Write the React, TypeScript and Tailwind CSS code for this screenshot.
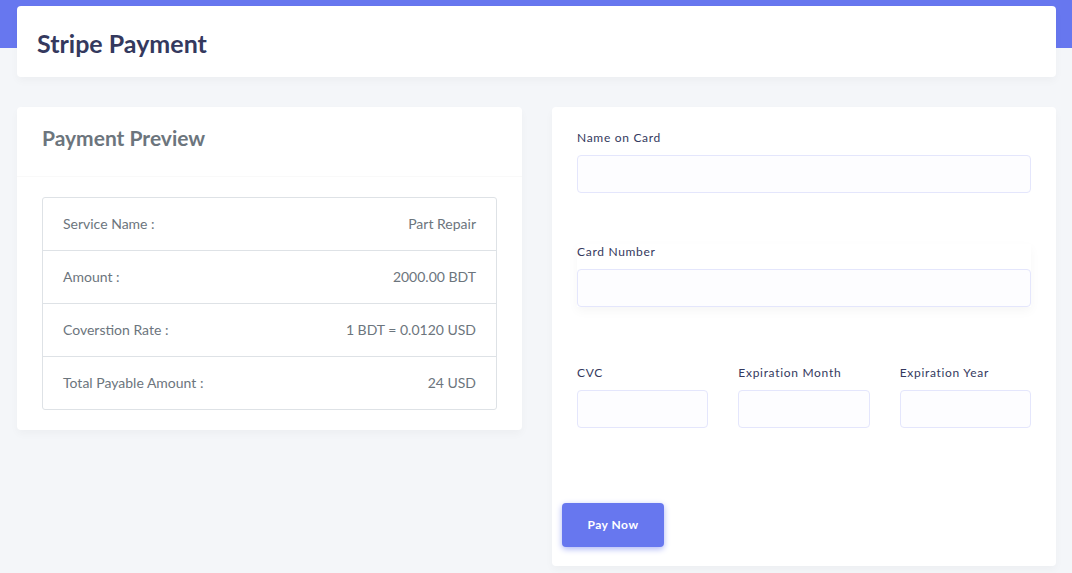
import React from 'react';

const rows = [
  { label: 'Service Name :', value: 'Part Repair' },
  { label: 'Amount :', value: '2000.00 BDT' },
  { label: 'Coverstion Rate :', value: '1 BDT = 0.0120 USD' },
  { label: 'Total Payable Amount :', value: '24 USD' },
];

const Field: React.FC<{ label: string; className?: string }> = ({ label, className = '' }) => (
  <div className={className}>
    <label className="block text-[12px] leading-[16px] font-normal tracking-[0.7px] text-[#34395e] mb-[9px]">{label}</label>
    <div className="h-[38px] rounded-[4px] border border-[#e4e6fc] bg-[#fdfdff]" />
  </div>
);

const App: React.FC = () => {
  return (
    <div className="relative min-h-[573px] bg-[#f4f6f9] font-['Lato','Open_Sans',sans-serif]">
      <div className="absolute inset-x-0 top-0 h-[48px] bg-[#6777ef]" />
      <div className="relative px-[17px] pt-[6px] pr-[16px]">
        <div className="h-[71px] rounded-[4px] bg-white shadow-[0_4px_8px_rgba(0,0,0,0.03)] flex items-center px-[20px]">
          <h1 className="text-[25px] leading-[30px] font-bold text-[#34395e] pt-[2px]">Stripe Payment</h1>
        </div>

        <div className="mt-[30px] flex gap-[30px] items-start">
          <div className="w-[505px] rounded-[4px] bg-white shadow-[0_4px_8px_rgba(0,0,0,0.03)]">
            <div className="h-[70px] border-b border-[#f9f9f9] flex items-center px-[25px]">
              <h4 className="text-[21px] leading-[26px] font-bold text-[#6c757d] pb-[8px]">Payment Preview</h4>
            </div>
            <div className="px-[25px] pt-[20px] pb-[20px]">
              <div className="rounded-[3px] border border-[#dee2e6]">
                {rows.map((r, i) => (
                  <div
                    key={r.label}
                    className={`flex items-center justify-between px-[20px] text-[14px] text-[#6c757d] pb-[2px] ${i > 0 ? 'h-[53px] border-t border-[#dee2e6]' : 'h-[52px]'}`}
                  >
                    <span>{r.label}</span>
                    <span>{r.value}</span>
                  </div>
                ))}
              </div>
            </div>
          </div>

          <div className="flex-1 h-[459px] rounded-[4px] bg-white shadow-[0_4px_8px_rgba(0,0,0,0.03)] px-[25px] pt-[23px] relative">
            <Field label="Name on Card" />
            <div className="mt-[51px] shadow-[0_4px_10px_rgba(0,0,0,0.04)]">
              <Field label="Card Number" />
            </div>
            <div className="mt-[58px] grid grid-cols-3 gap-[30px]">
              <Field label="CVC" />
              <Field label="Expiration Month" />
              <Field label="Expiration Year" />
            </div>
            <button className="absolute left-[10px] top-[396px] w-[102px] h-[44px] rounded-[4px] bg-[#6777ef] text-white text-[12px] font-bold tracking-[0.5px] shadow-[0_2px_6px_#acb5f6]">
              Pay Now
            </button>
          </div>
        </div>
      </div>
    </div>
  );
};

export default App;
